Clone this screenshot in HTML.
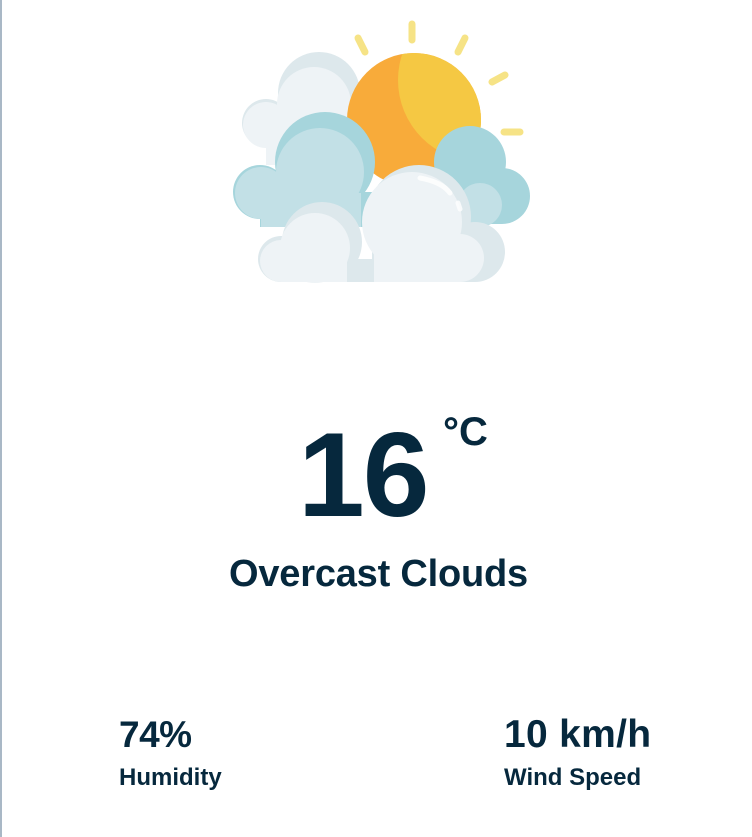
<!DOCTYPE html>
<html><head><meta charset="utf-8"><style>
html,body{margin:0;padding:0;background:#fff;}
body{width:752px;height:837px;position:relative;overflow:hidden;font-family:"Liberation Sans",sans-serif;color:#06283d;border-left:2px solid #a9b8c6;box-sizing:border-box;}
.t{position:absolute;white-space:nowrap;font-weight:bold;}
</style></head><body>
<svg style="position:absolute;left:0;top:0" width="752" height="300">
<g stroke="#f6e386" stroke-width="7" stroke-linecap="round">
<line x1="410" y1="24" x2="410" y2="40"/>
<line x1="356" y1="38" x2="363" y2="52"/>
<line x1="463" y1="38" x2="456" y2="52"/>
<line x1="490" y1="82" x2="503" y2="75"/>
<line x1="502" y1="132" x2="518" y2="132"/>
</g>
<g fill="#dde8ec"><circle cx="317" cy="93" r="41"/><circle cx="264" cy="123" r="24"/><rect x="264" y="123" width="90" height="40"/></g>
<g fill="#eef3f6"><circle cx="312" cy="104" r="37"/><circle cx="264" cy="125" r="23"/><rect x="264" y="125" width="80" height="40"/></g>
<circle cx="412" cy="120" r="67" fill="#f8ab3a"/>
<clipPath id="sc"><circle cx="412" cy="120" r="67"/></clipPath>
<circle cx="478" cy="80" r="82" fill="#f5c843" clip-path="url(#sc)"/>
<g fill="#a6d5dc"><circle cx="468" cy="162" r="36"/><circle cx="500" cy="196" r="28"/><rect x="468" y="196" width="32" height="28"/><circle cx="323" cy="162" r="50"/><circle cx="258" cy="192" r="27"/><rect x="258" y="192" width="120" height="35"/></g>
<g fill="#c2e0e6"><circle cx="318" cy="172" r="44"/><circle cx="259" cy="193" r="26"/><rect x="259" y="193" width="100" height="34"/><circle cx="478" cy="205" r="22"/></g>
<g fill="#dde8ec"><circle cx="417" cy="217" r="52"/><circle cx="473" cy="252" r="30"/><rect x="417" y="252" width="56" height="30"/><rect x="370" y="240" width="60" height="42"/><circle cx="320" cy="242" r="40"/><circle cx="279" cy="259" r="23"/><rect x="279" y="259" width="100" height="23"/></g>
<g fill="#eef3f6"><circle cx="410" cy="222" r="50"/><circle cx="458" cy="258" r="24"/><rect x="372" y="240" width="86" height="42"/><circle cx="313" cy="248" r="35"/><circle cx="279" cy="261" r="21"/><rect x="279" y="261" width="66" height="21"/></g>
<path d="M418 178 Q440 182 448 193" stroke="#fff" stroke-width="5" fill="none" stroke-linecap="round" opacity=".8"/>
<line x1="456" y1="203" x2="458" y2="209" stroke="#fff" stroke-width="5" stroke-linecap="round" opacity=".8"/>
</svg>
<div class="t" style="left:296px;top:410px;font-size:120px;line-height:130px;letter-spacing:-2px;">16</div>
<div class="t" style="left:441px;top:408px;font-size:40px;line-height:48px;">°C</div>
<div class="t" style="left:227px;top:550px;font-size:38px;line-height:48px;letter-spacing:-0.2px;">Overcast Clouds</div>
<div class="t" style="left:117px;top:711px;font-size:37px;line-height:48px;letter-spacing:-0.5px;">74%</div>
<div class="t" style="left:117px;top:762px;font-size:24px;line-height:32px;">Humidity</div>
<div class="t" style="left:502px;top:711px;font-size:39px;line-height:48px;letter-spacing:0.3px;">10 km/h</div>
<div class="t" style="left:502px;top:762px;font-size:24px;line-height:32px;">Wind Speed</div>
</body></html>
